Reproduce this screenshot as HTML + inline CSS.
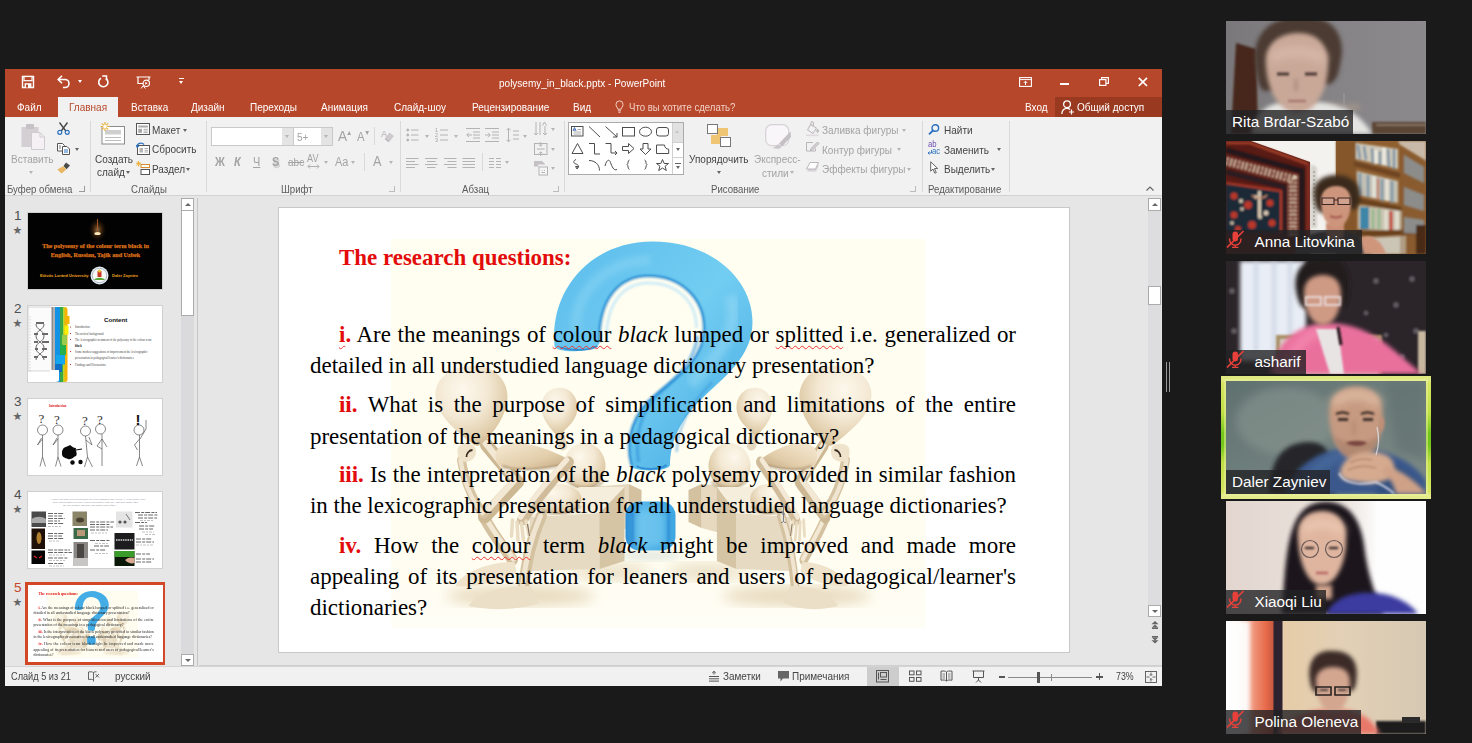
<!DOCTYPE html>
<html lang="ru">
<head>
<meta charset="utf-8">
<title>polysemy_in_black.pptx - PowerPoint</title>
<style>
*{box-sizing:border-box;margin:0;padding:0}
html,body{width:1472px;height:743px;overflow:hidden;background:#1a1a1a}
body{position:relative;font-family:"Liberation Sans","DejaVu Sans",sans-serif;font-size:11px;color:#444}
.a{position:absolute}
svg{position:absolute;overflow:visible}
/* UI text: 11px squeezed horizontally to approximate Segoe UI widths */
.t{position:absolute;white-space:nowrap;line-height:14px;height:14px;font-size:11px;color:#444;transform:scaleX(.91);transform-origin:0 50%}
.w{color:#fff}
.d{color:#a3a3a3}
.g{color:#5a5a5a;transform:scaleX(.875)}
.vs{position:absolute;top:121px;width:1px;height:71px;background:#d9d9d9}
.dd{position:absolute;width:0;height:0;border-left:2.5px solid transparent;border-right:2.5px solid transparent;border-top:3px solid #666}
.dd.l{border-top-color:#b5b5b5}
.dl{position:absolute;width:6px;height:6px;border-right:1px solid #999;border-bottom:1px solid #999}
</style>
</head>
<body>
<!-- PowerPoint window chrome -->
<div class="a" style="left:5px;top:69px;width:1157px;height:617px;background:#e6e6e6"></div>
<div class="a" style="left:5px;top:69px;width:1157px;height:48px;background:#b7472a"></div>
<div class="a" style="left:5px;top:117px;width:1157px;height:78px;background:#f1f1f1"></div>
<div class="a" style="left:5px;top:195px;width:1157px;height:1px;background:#d2d2d2"></div>
<!-- title bar -->
<div class="t w" style="left:499px;top:76px">polysemy_in_black.pptx - PowerPoint</div>
<svg style="left:21px;top:75px" width="14" height="14" viewBox="0 0 14 14"><path d="M1.5 1.5h11v11h-11z" fill="none" stroke="#fff" stroke-width="1.4"/><rect x="3" y="1.5" width="8" height="4.2" fill="#b7472a" stroke="#fff" stroke-width="1.2"/><rect x="3.6" y="8.2" width="6.8" height="4.3" fill="#fff"/><rect x="5" y="9.6" width="2" height="2.9" fill="#b7472a"/></svg>
<svg style="left:57px;top:75px" width="14" height="13" viewBox="0 0 14 13"><path d="M1.2 4.5H8a4 4 0 0 1 0 8H6" fill="none" stroke="#fff" stroke-width="1.6"/><path d="M5 .8 1.2 4.5 5 8.2" fill="none" stroke="#fff" stroke-width="1.6"/></svg>
<div class="dd" style="left:77.5px;top:80px;border-top-color:#fff"></div>
<svg style="left:97px;top:75px" width="13" height="13" viewBox="0 0 13 13"><path d="M8.8 3.3A4.6 4.6 0 1 1 4 3.2" fill="none" stroke="#fff" stroke-width="1.6"/><path d="M5.2 .9h4.3v4.3" fill="none" stroke="#fff" stroke-width="1.5"/></svg>
<svg style="left:136px;top:76px" width="15" height="13" viewBox="0 0 15 13"><path d="M.5 1h14M2 1v6.5h5M13 1v3" fill="none" stroke="#fff" stroke-width="1.2"/><circle cx="10.3" cy="7.3" r="3.2" fill="none" stroke="#fff" stroke-width="1.1"/><path d="M9.3 5.8v3l2.4-1.5z" fill="#fff"/><path d="M5 12.5l2.3-3M9.3 12.5 7.3 9.8" stroke="#fff" stroke-width="1" fill="none"/></svg>
<div class="a" style="left:179px;top:78px;width:5px;height:1px;background:#fff"></div>
<div class="dd" style="left:179px;top:81px;border-top-color:#fff"></div>
<!-- window controls -->
<svg style="left:1019px;top:77px" width="13" height="10" viewBox="0 0 13 10"><rect x=".6" y=".6" width="11.8" height="8.8" fill="none" stroke="#fff" stroke-width="1.1"/><path d="M.6 2.6h11.8" stroke="#fff" stroke-width="1"/><path d="M6.5 8V4.4M4.7 6 6.5 4.2 8.3 6" fill="none" stroke="#fff" stroke-width="1"/></svg>
<div class="a" style="left:1060px;top:83px;width:9px;height:1.6px;background:#fff"></div>
<svg style="left:1099px;top:77px" width="10" height="9" viewBox="0 0 10 9"><rect x=".6" y="2.6" width="6.3" height="5.8" fill="none" stroke="#fff" stroke-width="1.2"/><path d="M2.6 2.4V.6h6.8v5.8H7.2" fill="none" stroke="#fff" stroke-width="1.2"/></svg>
<svg style="left:1138px;top:77px" width="10" height="10" viewBox="0 0 10 10"><path d="M.8.8l8.2 8.2M9 .8.8 9" stroke="#fff" stroke-width="1.7"/></svg>
<!-- tabs -->
<div class="a" style="left:58px;top:97px;width:60px;height:20px;background:#f1f1f1"></div>
<div class="a" style="left:1055px;top:97px;width:107px;height:20px;background:#99391f"></div>
<div class="t w" style="left:17px;top:100px">Файл</div>
<div class="t" style="left:69px;top:100px;color:#b7472a">Главная</div>
<div class="t w" style="left:131px;top:100px">Вставка</div>
<div class="t w" style="left:191px;top:100px">Дизайн</div>
<div class="t w" style="left:250px;top:100px">Переходы</div>
<div class="t w" style="left:321px;top:100px">Анимация</div>
<div class="t w" style="left:394px;top:100px">Слайд-шоу</div>
<div class="t w" style="left:472px;top:100px">Рецензирование</div>
<div class="t w" style="left:573px;top:100px">Вид</div>
<svg style="left:615px;top:100px" width="9" height="13" viewBox="0 0 9 13"><path d="M2.8 9.2C2.8 7.6 1 6.8 1 4.4a3.5 3.5 0 0 1 7 0C8 6.8 6.2 7.6 6.2 9.2z" fill="none" stroke="#f1cfc5" stroke-width="1"/><path d="M3 10.8h3M3.4 12.3h2.2" stroke="#f1cfc5" stroke-width="1"/></svg>
<div class="t" style="left:629px;top:100px;color:#f1cfc5;transform:scaleX(.875)">Что вы хотите сделать?</div>
<div class="t w" style="left:1025px;top:100px">Вход</div>
<svg style="left:1061px;top:100px" width="14" height="15" viewBox="0 0 14 15"><circle cx="6" cy="4.2" r="3.4" fill="none" stroke="#fff" stroke-width="1.3"/><path d="M.8 14c.3-3.6 2.2-5.6 5.2-5.6 1.300 0 2.300.4 3.100 1" fill="none" stroke="#fff" stroke-width="1.3"/><path d="M10.5 9.500v5M8 12h5" stroke="#fff" stroke-width="1.2"/></svg>
<div class="t w" style="left:1077px;top:100px">Общий доступ</div>
<!-- ribbon: clipboard -->
<svg style="left:21px;top:124px" width="24" height="26" viewBox="0 0 24 26"><rect x=".5" y="3" width="17" height="20" fill="#d3cfd3"/><rect x="5" y="0" width="8" height="5" rx="1" fill="#c5c1c5"/><path d="M10.500 8.500h8.500l4.500 4.500v12.500h-13z" fill="#f4f0f4" stroke="#cfcbcf" stroke-width="1"/><path d="M19 8.500v4.500h4.500" fill="none" stroke="#cfcbcf"/></svg>
<div class="t d" style="left:11px;top:152px">Вставить</div>
<div class="dd l" style="left:29px;top:171px"></div>
<svg style="left:57px;top:122px" width="13" height="13" viewBox="0 0 13 13"><path d="M2.500.5 8.800 9M10.500.5 4.200 9" stroke="#444" stroke-width="1.300" fill="none"/><circle cx="2.800" cy="10.300" r="2" fill="none" stroke="#2b71c1" stroke-width="1.200"/><circle cx="10.200" cy="10.300" r="2" fill="none" stroke="#2b71c1" stroke-width="1.200"/></svg>
<svg style="left:57px;top:143px" width="13" height="12" viewBox="0 0 13 12"><path d="M.5.5h5l2 2V8h-7z" fill="#fff" stroke="#555" stroke-width="1"/><path d="M5.500 3.500h4.500l2.500 2.500v5.500h-7z" fill="#fff" stroke="#555" stroke-width="1"/><path d="M7 7h4M7 9h4" stroke="#2b71c1" stroke-width="1"/><path d="M2 3h2M2 5h2" stroke="#555" stroke-width=".8"/></svg>
<div class="dd" style="left:75px;top:148px"></div>
<svg style="left:57px;top:162px" width="14" height="12" viewBox="0 0 14 12"><path d="M9 .5 13 3.500 9.500 7.200 6.500 4z" fill="#4a4a4a"/><path d="M6.200 4.300 9.300 7.500 4.500 11.500.3 7.500z" fill="#eab560"/></svg>
<div class="t g" style="left:7px;top:182px">Буфер обмена</div>
<div class="dl" style="left:79px;top:186px"></div>
<div class="vs" style="left:90px"></div>
<!-- ribbon: slides -->
<svg style="left:100px;top:122px" width="25" height="23" viewBox="0 0 25 23"><rect x="2" y="4.500" width="22.500" height="17.500" fill="#fff" stroke="#8c8c8c" stroke-width="1"/><rect x="5" y="8" width="16" height="4.500" fill="#cfcfcf"/><path d="M5 15.500h16M5 18.500h16" stroke="#bdbdbd" stroke-width="1"/><g stroke="#eab03a" stroke-width="1.200"><path d="M5 0v9M.5 4.500h9M1.800 1.300l6.400 6.400M8.200 1.300 1.800 7.700"/></g><circle cx="5" cy="4.500" r="1.800" fill="#fff"/></svg>
<div class="t" style="left:95px;top:152px">Создать</div>
<div class="t" style="left:97px;top:165px">слайд</div>
<div class="dd" style="left:126px;top:171px"></div>
<svg style="left:136px;top:123px" width="14" height="12" viewBox="0 0 14 12"><rect x=".5" y=".5" width="13" height="11" fill="#fff" stroke="#555" stroke-width="1"/><rect x="2.200" y="2.500" width="9.600" height="2" fill="#a9a9a9"/><rect x="2.200" y="5.800" width="3.800" height="4" fill="#a9a9a9"/><path d="M7.500 6.300h4.300M7.500 8h4.300M7.500 9.600h4.300" stroke="#999" stroke-width=".8"/></svg>
<div class="t" style="left:152px;top:123px">Макет</div>
<div class="dd" style="left:183px;top:128.500px"></div>
<svg style="left:136px;top:142px" width="14" height="13" viewBox="0 0 14 13"><rect x="1.500" y="3.500" width="12" height="9" fill="#fff" stroke="#555" stroke-width="1"/><rect x="3.500" y="6" width="3.500" height="4.500" fill="#b5b5b5"/><path d="M8.500 6.500h3.500M8.500 8.300h3.500M8.500 10h3.500" stroke="#999" stroke-width=".8"/><path d="M.8 5.200C.8 2.800 2.600 1.200 5 1.200c1.300 0 2.300.5 3 1.300" fill="none" stroke="#2b71c1" stroke-width="1.300"/><path d="M0 2.800.9 5.800 3.600 4.500z" fill="#2b71c1"/></svg>
<div class="t" style="left:152px;top:142px">Сбросить</div>
<svg style="left:136px;top:161px" width="14" height="14" viewBox="0 0 14 14"><rect x="5" y="3.500" width="8.500" height="3" fill="#fff" stroke="#d98c2b" stroke-width="1"/><rect x="5" y="8.500" width="8.500" height="5" fill="#fff" stroke="#555" stroke-width="1"/><g stroke="#eab03a" stroke-width=".9"><path d="M2.500 0v5.500M0 2.700h5.200M.7.900l3.700 3.700M4.400.9.700 4.600"/></g></svg>
<div class="t" style="left:152px;top:162px">Раздел</div>
<div class="dd" style="left:186px;top:167.500px"></div>
<div class="t g" style="left:131px;top:182px">Слайды</div>
<div class="vs" style="left:206px"></div>
<!-- ribbon: font -->
<div class="a" style="left:211px;top:127px;width:83px;height:18.500px;background:#fff;border:1px solid #c9c9c9"></div>
<div class="a" style="left:282px;top:128px;width:11px;height:16.500px;background:#e4e4e4"></div>
<div class="a" style="left:293px;top:127px;width:40px;height:18.500px;background:#fff;border:1px solid #c9c9c9"></div>
<div class="a" style="left:321px;top:128px;width:11px;height:16.500px;background:#e4e4e4"></div>
<div class="dd l" style="left:285px;top:135px"></div>
<div class="dd l" style="left:324px;top:135px"></div>
<div class="t d" style="left:297px;top:130px">5+</div>
<div class="t d" style="left:338px;top:128px;font-size:15px;line-height:16px;height:16px">A</div>
<div class="t d" style="left:346px;top:126px;font-size:7px">▲</div>
<div class="t d" style="left:357px;top:130px;font-size:12.500px">A</div>
<div class="t d" style="left:364px;top:126px;font-size:7px">▼</div>
<div class="a" style="left:373.500px;top:127px;width:1px;height:18px;background:#d9d9d9"></div>
<svg style="left:381px;top:129px" width="14" height="14" viewBox="0 0 14 14"><text x="0" y="8" font-size="9" fill="#b4b0b4" font-family="Liberation Sans, sans-serif">A</text><path d="M8.500 3.500 13 7l-4.500 5.500L4.300 9z" fill="#cdc9cd"/><path d="M4 9.500 8 12.800" stroke="#b4b0b4" stroke-width="1.200"/></svg>
<div class="t d" style="left:215px;top:155px;font-weight:bold;font-size:12px">Ж</div>
<div class="t d" style="left:234px;top:155px;font-style:italic;font-weight:bold;font-size:12px">К</div>
<div class="t d" style="left:253px;top:155px;font-size:12px;text-decoration:underline">Ч</div>
<div class="t d" style="left:272px;top:155px;font-size:12px;font-weight:bold;text-shadow:1px 1.500px 1px #ccc">S</div>
<div class="t d" style="left:288px;top:155px;font-size:11px;text-decoration:line-through">abc</div>
<div class="t d" style="left:307px;top:152px;font-size:10px">AV</div>
<svg style="left:307px;top:164px" width="13" height="5" viewBox="0 0 13 5"><path d="M1 2.500h11M3 .5 1 2.500l2 2M10 .5l2 2-2 2" fill="none" stroke="#b0b0b0" stroke-width="1"/></svg>
<div class="dd l" style="left:323.500px;top:161px"></div>
<div class="t d" style="left:334.500px;top:155px;font-size:12px">Aa</div>
<div class="dd l" style="left:351px;top:161px"></div>
<div class="a" style="left:363.500px;top:153px;width:1px;height:18px;background:#d9d9d9"></div>
<div class="t d" style="left:373px;top:154px;font-size:14px">A</div>
<div class="dd l" style="left:388.500px;top:161px"></div>
<div class="t g" style="left:280.500px;top:182px">Шрифт</div>
<div class="dl" style="left:389px;top:186px;border-color:#bbb"></div>
<div class="vs" style="left:400px"></div>
<!-- ribbon: paragraph (disabled, light grey) -->
<svg style="left:406px;top:128px" width="150" height="48" viewBox="0 0 150 48" fill="none" stroke="#b3b3b3" stroke-width="1">
<g><circle cx="1.800" cy="2" r="1" fill="#b3b3b3"/><circle cx="1.800" cy="7" r="1" fill="#b3b3b3"/><circle cx="1.800" cy="12" r="1" fill="#b3b3b3"/><path d="M5 2h7.500M5 7h7.500M5 12h7.500"/></g>
<g transform="translate(29,0)"><path d="M5 2h8M5 7h8M5 12h8"/></g>
<g transform="translate(60,0)"><path d="M0 .5h14M7 4h7M7 7h7M7 10h7M0 13.500h14M6 7H.8M3 4.800.8 7 3 9.200"/></g>
<g transform="translate(79,0)"><path d="M0 .5h14M7 4h7M7 7h7M7 10h7M0 13.500h14M0 7h5.200M3 4.800 5.200 7 3 9.200"/></g>
<g transform="translate(100,0)"><path d="M2.500 0v14M.5 2.200 2.500.2l2 2M.5 11.800l2 2 2-2M7 3h6M7 7h6M7 11h6"/></g>
<g transform="translate(0,30)"><path d="M0 .5h12.500M0 3.500h9M0 6.500h12.500M0 9.500h9"/></g>
<g transform="translate(19,30)"><path d="M0 .5h12.500M2 3.500h8.500M0 6.500h12.500M2 9.500h8.500"/></g>
<g transform="translate(38,30)"><path d="M0 .5h12.500M3.500 3.500h9M0 6.500h12.500M3.500 9.500h9"/></g>
<g transform="translate(56.500,30)"><path d="M0 .5h12.500M0 3.500h12.500M0 6.500h12.500M0 9.500h12.500"/></g>
<g transform="translate(83,30)"><path d="M0 .5h5M7 .5h5M0 3.500h5M7 3.500h5M0 6.500h5M7 6.500h5M0 9.500h5M7 9.500h5"/></g>
<g transform="translate(128,-6)"><path d="M2 0v13M0 11l2 2 2-2M6 0v13M11 4v9M9 11l2 2 2-2M8.500 3.500 10.500 0l2 3.500"/></g>
<g transform="translate(128,14)"><rect x=".5" y="1.500" width="12.500" height="11"/><path d="M6.700 0v4M5 2.500 6.700 4.200 8.400 2.500M6.700 14v-4M5 11.500l1.700-1.700 1.700 1.700M3 7h7.500" /></g>
<g transform="translate(128,33)"><path d="M0 0h8l3.500 3.500H3.500L5 5.500 0 5.500z" fill="#c4c0c4" stroke="none"/><rect x="5" y="6" width="8.500" height="8" fill="#f6f6f6"/><path d="M7.500 9.500h1M10 9.500h1M7.500 11.500h3.500" /></g>
</svg>
<div class="t d" style="left:434.500px;top:128px;font-size:6px;line-height:5px;height:16px;white-space:pre">1
2
3</div>
<div class="dd l" style="left:424.500px;top:134.500px"></div>
<div class="dd l" style="left:453.500px;top:134.500px"></div>
<div class="dd l" style="left:523px;top:134.500px"></div>
<div class="dd l" style="left:551px;top:128px"></div>
<div class="dd l" style="left:551px;top:147.500px"></div>
<div class="dd l" style="left:551px;top:167px"></div>
<div class="dd l" style="left:505px;top:161px"></div>
<div class="a" style="left:482px;top:153px;width:1px;height:18px;background:#d9d9d9"></div>
<div class="t g" style="left:461.500px;top:182px">Абзац</div>
<div class="dl" style="left:553px;top:186px;border-color:#bbb"></div>
<div class="vs" style="left:563.500px"></div>
<!-- ribbon: drawing -->
<div class="a" style="left:568px;top:122px;width:116px;height:53px;background:#fff;border:1px solid #ababab"></div>
<div class="a" style="left:672px;top:123px;width:11px;height:18.500px;background:#e1e1e1"></div>
<div class="a" style="left:672px;top:141.500px;width:11px;height:1px;background:#d0d0d0"></div>
<div class="a" style="left:672px;top:157px;width:11px;height:1px;background:#d0d0d0"></div>
<div class="a" style="left:672px;top:123px;width:1px;height:51px;background:#d0d0d0"></div>
<div class="a" style="left:675px;top:130px;width:0;height:0;border-left:2.500px solid transparent;border-right:2.500px solid transparent;border-bottom:3px solid #c4c4c4"></div>
<div class="dd" style="left:675.500px;top:148px"></div>
<div class="a" style="left:675px;top:163px;width:6px;height:1px;background:#666"></div>
<div class="dd" style="left:675.500px;top:166px"></div>
<svg style="left:571px;top:125px" width="100" height="48" viewBox="0 0 100 48" fill="none" stroke="#4d4d4d" stroke-width="1">
<rect x=".5" y="1.500" width="11.500" height="9.500" fill="#fff"/><path d="M2.500 7h7.500M2.500 9h7.500M6.500 4.500h3.500" stroke="#8a8a8a" stroke-width=".7"/><path d="M2 6 3.500 2.500 5 6M2.600 5h1.800" stroke="#2b5fb0" stroke-width=".9"/>
<path d="M18 1.500 29 12"/>
<path d="M34.500 1.500 46 12M46 8v4h-4"/>
<rect x="51.500" y="2.500" width="12" height="8.500"/>
<ellipse cx="74.500" cy="6.700" rx="6" ry="4.500"/>
<rect x="85.500" y="2.500" width="12" height="8.500" rx="2.500"/>
<path d="M6.500 18.500 12 28.500H1z"/>
<path d="M18 18.500h5.500V29H29"/>
<path d="M34.500 18.500h5.500V28h6M44 26l2 2-2 2"/>
<path d="M51.500 21.500h6V18.500l5.500 5-5.500 5v-3h-6z"/>
<path d="M72 18.500h5v5.500h3L74.500 29.500 69 24h3z"/>
<path d="M85.500 20h8a4.200 4.200 0 0 0 4.200 4.200V28.500H85.500z"/>
<path d="M5 34.500c-3.500 1.500-2.500 4 0 4.500s3 2.500 1 4.500M4.500 41.500l1.600 2.500 1.600-2.500z"/>
<path d="M18 35.500c6 0 10.500 4 10.500 10"/>
<path d="M34 41c1.500-6 4-7.500 5.500-3.500s3 8.500 6.500 7"/>
<path d="M58.500 35c-2 0-1 4.500-2.500 4.700 1.500.2.500 4.700 2.500 4.700"/>
<path d="M73.500 35c2 0 1 4.500 2.500 4.700-1.500.2-.5 4.700-2.500 4.700"/>
<path d="M91.500 34.500l1.700 4h4.300l-3.400 2.700 1.200 4.300-3.800-2.500-3.800 2.500 1.200-4.300-3.400-2.700h4.300z"/>
</svg>
<div class="a" style="left:717px;top:127.500px;width:10.500px;height:8.500px;background:#efc473"></div>
<div class="a" style="left:710.500px;top:135px;width:10.500px;height:9px;background:#efc473"></div>
<div class="a" style="left:707px;top:124px;width:10.500px;height:9.500px;background:#fff;border:1px solid #777"></div>
<div class="a" style="left:720px;top:137px;width:10.500px;height:10px;background:#fff;border:1px solid #777"></div>
<div class="t" style="left:688.500px;top:152px">Упорядочить</div>
<div class="dd" style="left:717px;top:171px"></div>
<svg style="left:765px;top:124px" width="27" height="26" viewBox="0 0 27 26"><rect x=".7" y=".7" width="23" height="21" rx="6" fill="#f8f6f8" stroke="#d6d2d6" stroke-width="1.200"/><path d="M25.500 7.500 26 13 17 22.500 14 19.500z" fill="#c4c0c4"/><path d="M13.500 20 16.500 23c-2 2.500-6 2-9 1 3-.5 3.500-3 6-4z" fill="#cbc7cb"/></svg>
<div class="t d" style="left:754px;top:152px">Экспресс-</div>
<div class="t d" style="left:761.500px;top:165.500px">стили</div>
<div class="dd l" style="left:790px;top:171px"></div>
<svg style="left:806px;top:121px" width="14" height="15" viewBox="0 0 14 15" fill="none" stroke="#b9b5b9" stroke-width="1"><path d="M4.500 3.500 10.500 7 7 12.500 1.500 9z"/><path d="M5 4.500V1.800a1.200 1.200 0 0 1 2.400 0V5"/><path d="M11.500 8c1 1.500 1.500 2.500.5 3.200s-1.800-.7-.5-3.200z" fill="#c9c5c9"/><path d="M0 14.300h12.500" stroke="#dedade" stroke-width="1.600"/></svg>
<div class="t d" style="left:822px;top:123px">Заливка фигуры</div>
<div class="dd l" style="left:902px;top:128.500px"></div>
<svg style="left:806px;top:141px" width="14" height="11" viewBox="0 0 14 11" fill="none" stroke="#b9b5b9" stroke-width="1"><path d="M7 1.500H.5v8.500h9V7.500"/><path d="M5 7.500 11.500 1l1.500 1.500L6.500 9l-2 .5z" fill="#d4d0d4"/></svg>
<div class="t d" style="left:822px;top:142.500px">Контур фигуры</div>
<div class="dd l" style="left:897px;top:148px"></div>
<svg style="left:806px;top:162px" width="14" height="11" viewBox="0 0 14 11"><path d="M1 9.500 4.500 3h8.500L10 9.500z" fill="#d6d2d6"/><path d="M.5 7 4 .5h8.500L9.500 7z" fill="#fff" stroke="#b9b5b9" stroke-width="1"/></svg>
<div class="t d" style="left:822px;top:162px">Эффекты фигуры</div>
<div class="dd l" style="left:907px;top:167.500px"></div>
<div class="t g" style="left:711px;top:182px">Рисование</div>
<div class="dl" style="left:910px;top:186px;border-color:#bbb"></div>
<div class="vs" style="left:921.500px"></div>
<!-- ribbon: editing -->
<svg style="left:928px;top:124px" width="12" height="11" viewBox="0 0 12 11" fill="none" stroke="#2b71c1"><circle cx="7.300" cy="4" r="3.300" stroke-width="1.400"/><path d="M5 6.500 1 10.300" stroke-width="1.800"/></svg>
<div class="t" style="left:943.500px;top:123px">Найти</div>
<div class="t" style="left:928px;top:140px;font-size:8.500px;color:#6a4fb3;line-height:9px;height:9px">ab</div>
<div class="t" style="left:932px;top:147px;font-size:8.500px;color:#2b71c1;line-height:9px;height:9px">ac</div>
<svg style="left:927px;top:149px" width="5" height="6" viewBox="0 0 5 6"><path d="M4.500 1v3H1M2.500 2.500 1 4l1.500 1.500" fill="none" stroke="#2b71c1" stroke-width=".9"/></svg>
<div class="t" style="left:943.500px;top:142.500px">Заменить</div>
<div class="dd" style="left:996.500px;top:148px"></div>
<svg style="left:930px;top:161px" width="9" height="13" viewBox="0 0 9 13"><path d="M.7.800v9.400l2.300-2.200 1.800 4.200 1.500-.6-1.800-4.100h3.200z" fill="#fff" stroke="#555" stroke-width=".9"/></svg>
<div class="t" style="left:943.500px;top:162px">Выделить</div>
<div class="dd" style="left:990.500px;top:167.500px"></div>
<div class="t g" style="left:927.500px;top:182px">Редактирование</div>
<div class="vs" style="left:1009px"></div>
<svg style="left:1146px;top:186px" width="8" height="5" viewBox="0 0 8 5"><path d="M.5 4.500 4 1l3.500 3.500" fill="none" stroke="#666" stroke-width="1.200"/></svg>
<!-- thumbnail pane scrollbar + dividers -->
<div class="a" style="left:181px;top:198px;width:13px;height:468px;background:#dad9db"></div>
<div class="a" style="left:181px;top:198px;width:13px;height:12.500px;background:#fff;border:1px solid #ababab"></div>
<div class="a" style="left:181px;top:210px;width:13px;height:106px;background:#fff;border:1px solid #ababab"></div>
<div class="a" style="left:181px;top:654px;width:13px;height:12px;background:#fff;border:1px solid #ababab"></div>
<div class="a" style="left:184.500px;top:202.500px;width:0;height:0;border-left:3px solid transparent;border-right:3px solid transparent;border-bottom:3.500px solid #666"></div>
<div class="a" style="left:184.500px;top:658.500px;width:0;height:0;border-left:3px solid transparent;border-right:3px solid transparent;border-top:3.500px solid #666"></div>
<div class="a" style="left:197px;top:198px;width:1px;height:468px;background:#c6c6c6"></div>
<div class="a" style="left:199px;top:665px;width:963px;height:1px;background:#cfcfcf"></div>
<!-- editor scrollbar -->
<div class="a" style="left:1148px;top:198px;width:13px;height:419px;background:#dddcde"></div>
<div class="a" style="left:1148px;top:198px;width:13px;height:12.500px;background:#fff;border:1px solid #ababab"></div>
<div class="a" style="left:1148px;top:286px;width:13px;height:19px;background:#fff;border:1px solid #ababab"></div>
<div class="a" style="left:1148px;top:605px;width:13px;height:12px;background:#fff;border:1px solid #ababab"></div>
<div class="a" style="left:1151.500px;top:202.500px;width:0;height:0;border-left:3px solid transparent;border-right:3px solid transparent;border-bottom:3.500px solid #666"></div>
<div class="a" style="left:1151.500px;top:609.500px;width:0;height:0;border-left:3px solid transparent;border-right:3px solid transparent;border-top:3.500px solid #666"></div>
<svg style="left:1151px;top:621px" width="8" height="23" viewBox="0 0 8 23" fill="#666"><path d="M4 0 7.500 3.200H.5zM4 3.500 7.500 6.700H.5z"/><rect x="1" y="7" width="6" height="1"/><rect x="1" y="15" width="6" height="1"/><path d="M4 22.500.5 19.300h7zM4 19.500.5 16.300h7z"/></svg>
<!-- zoom window splitter -->
<div class="a" style="left:1166px;top:362px;width:1px;height:30px;background:#9a9a9a"></div>
<div class="a" style="left:1169px;top:362px;width:1px;height:30px;background:#9a9a9a"></div>
<!-- status bar -->
<div class="a" style="left:5px;top:667px;width:1157px;height:19px;background:#f1f1f1"></div>
<div class="a" style="left:5px;top:666px;width:1157px;height:1px;background:#d4d4d4"></div>
<div class="t" style="left:11px;top:669px;transform:scaleX(.835)">Слайд 5 из 21</div>
<svg style="left:88px;top:671px" width="12" height="11" viewBox="0 0 12 11" fill="none" stroke="#555" stroke-width=".9"><path d="M5.500 1.500C4.500.8 2.500.6.500 1v7.500c2-.4 4-.2 5 .5zM5.500 1.500C6.500.8 7.500.6 8.500.8"/><path d="M5.500 9v1.500M7.500 3l3.500 3.500M11 3 7.500 6.500" /></svg>
<div class="t" style="left:114.500px;top:669px;transform:scaleX(.9)">русский</div>
<svg style="left:709px;top:671px" width="10" height="11" viewBox="0 0 10 11" stroke="#555" stroke-width="1" fill="none"><path d="M0 5.500h10M0 7.800h10M0 10.100h10M5 .5v3M3.200 2 5 .3 6.800 2"/></svg>
<div class="t" style="left:722.500px;top:669px;transform:scaleX(.9)">Заметки</div>
<svg style="left:778px;top:671px" width="11" height="11" viewBox="0 0 11 11"><path d="M0 0h11v7.500H5L2.500 10.500V7.500H0z" fill="#666"/></svg>
<div class="t" style="left:792px;top:669px;transform:scaleX(.905)">Примечания</div>
<div class="a" style="left:866.500px;top:667px;width:32.500px;height:19px;background:#cdcdcd"></div>
<svg style="left:876px;top:670px" width="110" height="13" viewBox="0 0 110 13" fill="none" stroke="#555" stroke-width="1"><rect x=".5" y=".5" width="12" height="11.500"/><rect x="4.500" y="2.500" width="6" height="4.500"/><path d="M2.500 2.500v7M4.500 9.500h6"/>
<g transform="translate(33,0)"><rect x=".5" y="1" width="4.500" height="3.800"/><rect x="7.500" y="1" width="4.500" height="3.800"/><rect x=".5" y="7.500" width="4.500" height="3.800"/><rect x="7.500" y="7.500" width="4.500" height="3.800"/></g>
<g transform="translate(64.500,0)"><path d="M6 2C5 1 3 .8.500 1.200v9c2.500-.4 4.500-.2 5.500.8 1-1 3-1.200 5.500-.8v-9C9 .8 7 1 6 2zM6 2v9"/><path d="M2 4h2.500M2 6h2.500M2 8h2.500M7.500 4H10M7.500 6H10M7.500 8H10" stroke-width=".7"/></g>
<g transform="translate(96.500,0)"><path d="M0 1h12M1 1v6.500h10V1M6 7.500V10M3.500 12.500 6 10l2.500 2.500"/></g></svg>
<div class="a" style="left:999px;top:676px;width:5.500px;height:1.500px;background:#555"></div>
<div class="a" style="left:1008px;top:676.500px;width:84px;height:1px;background:#8a8a8a"></div>
<div class="a" style="left:1050.500px;top:673.500px;width:1px;height:7px;background:#8a8a8a"></div>
<div class="a" style="left:1036.500px;top:671.500px;width:3.500px;height:11px;background:#555"></div>
<div class="a" style="left:1096px;top:676px;width:7px;height:1.500px;background:#555"></div>
<div class="a" style="left:1098.800px;top:673.300px;width:1.500px;height:7px;background:#555"></div>
<div class="t" style="left:1115.500px;top:669px;transform:scaleX(.8)">73%</div>
<svg style="left:1145px;top:671px" width="12" height="12" viewBox="0 0 12 12" fill="none" stroke="#555" stroke-width=".9"><rect x=".5" y=".5" width="11" height="11"/><path d="M6 1.500v3M6 10.500v-3M1.500 6h3M10.500 6h-3M4.800 3.300 6 4.500l1.200-1.200M4.800 8.700 6 7.500l1.200 1.200"/></svg>
<!-- slide thumbnails -->
<style>
.sn{position:absolute;left:7.500px;width:14px;text-align:right;font-size:13.500px;line-height:14px;color:#505050}
.star{position:absolute;left:12px;width:11px;font-size:11px;line-height:10px;color:#666;text-align:center}
.th{position:absolute;left:27px;width:136px;height:77.500px;background:#fff;border:1px solid #d0d0d0;overflow:hidden}
.th svg{left:0;top:0}
.tx{font-family:"Liberation Serif",serif}
</style>
<div class="sn" style="top:209px">1</div><div class="star" style="top:225px">★</div>
<div class="sn" style="top:302px">2</div><div class="star" style="top:318px">★</div>
<div class="sn" style="top:395px">3</div><div class="star" style="top:411px">★</div>
<div class="sn" style="top:488px">4</div><div class="star" style="top:504px">★</div>
<div class="sn" style="top:581px;color:#c8472a">5</div><div class="star" style="top:597px">★</div>

<!-- thumb 1 -->
<div class="th" style="top:212px;background:#000">
<svg width="134" height="76" viewBox="0 0 134 76">
<defs><radialGradient id="gl"><stop offset="0" stop-color="#ffe0a0"/><stop offset=".35" stop-color="#c87830" stop-opacity=".7"/><stop offset="1" stop-color="#301808" stop-opacity="0"/></radialGradient></defs>
<rect width="134" height="76" fill="#020202"/>
<ellipse cx="69.500" cy="17" rx="9" ry="12" fill="url(#gl)" opacity=".55"/><ellipse cx="69.500" cy="20.500" rx="3.200" ry="1.600" fill="#ffe8b8"/><path d="M69.500 6v12" stroke="#a05828" stroke-width="1"/>
<g class="tx" font-family="Liberation Serif, serif" font-weight="bold" font-size="6.100" fill="#f6a31e" text-anchor="middle" stroke="#b83a10" stroke-width=".25"><text x="67.500" y="35.300">The polysemy of the colour term  black in</text><text x="67.500" y="43.500">English, Russian, Tajik and Uzbek</text></g>
<g font-family="Liberation Sans, sans-serif" font-weight="bold" font-size="4" fill="#f6a31e"><text x="12" y="64">Eötvös Loránd University</text><text x="84" y="64">Daler Zayniev</text></g>
<circle cx="71.500" cy="62.500" r="9" fill="#e8ecf0"/><circle cx="71.500" cy="62.500" r="7.200" fill="#f8f8f8" stroke="#98a8b8" stroke-width=".8"/><path d="M66 67c2-3 9-3 11 0z" fill="#58a838"/><rect x="69.500" y="58" width="4" height="6" fill="#c83828"/><circle cx="71.500" cy="58" r="1.600" fill="#e8b838"/>
</svg></div>

<!-- thumb 2 -->
<div class="th" style="top:305px">
<svg width="134" height="76" viewBox="0 0 134 76">
<path d="M0 1h22c3 0 4.500 2 4.500 5v59H0z" fill="#fbfbfb" stroke="#bdbdbd" stroke-width=".6"/>
<path d="M2 10v56" stroke="#aaa" stroke-width=".5" stroke-dasharray="1.500 1.500"/>
<path d="M23.500 1h4v65h-4z" fill="#8c8c8c"/><path d="M25 1h3v64h-3z" fill="#b0b0b0"/>
<path d="M27 1h7v75h-7z" fill="#1292e4"/><path d="M32 1h4v75h-4z" fill="#3aa846"/><path d="M35 1h2.500v75H35z" fill="#b4d334"/><path d="M36.500 1c2 0 3 1 3 3v70c0 1-1 2-3 2z" fill="#f6b400"/>
<path d="M38 10h3.500v8H38z" fill="#f6b400"/><path d="M36.500 19.500h4v9h-4z" fill="#f8f000"/><path d="M34 29h5v9.500h-5z" fill="#9acc4c"/><path d="M32 39h6v10h-6z" fill="#22b14c"/><path d="M28 49h9v9.500h-9z" fill="#14a6ec"/><path d="M27 58h7v8h-7z" fill="#0f6fc6"/>
<path d="M22 64h9v10c0 1-1 2-4 2H22z" fill="#fff"/>
<g stroke="#6a6a6a" stroke-width="1" fill="none"><path d="M8 18c0 6 8 6 8 12s-8 6-8 12 8 6 8 12M16 18c0 6-8 6-8 12s8 6 8 12-8 6-8 12"/><path d="M8 17h8M6 28h4M14 28h6M6 36h4M14 36h7M7 43h3M14 43h5M6 51h4M14 51h5" stroke-width="1.800"/></g>
<text x="76" y="16" font-family="Liberation Sans, sans-serif" font-weight="bold" font-size="6.200" fill="#111">Content</text>
<g font-family="Liberation Serif, serif" font-size="3" fill="#444"><text x="47" y="22">Introduction</text><text x="47" y="28.500">Theoretical background</text><text x="47" y="34.500">The lexicographic treatment of the polysemy of the colour term</text><text x="47" y="40.500" font-weight="bold" font-style="italic" fill="#000">black</text><text x="47" y="46.500">Some modest suggestions of improvement the lexicographic</text><text x="47" y="52.500">presentation in pedagogical/learner's  dictionaries</text><text x="47" y="59.500">Findings and Discussions</text></g>
<g fill="#b02020"><circle cx="42.500" cy="21" r=".6"/><circle cx="42.500" cy="27.500" r=".6"/><circle cx="42.500" cy="33.500" r=".6"/><circle cx="42.500" cy="45.500" r=".6"/><circle cx="42.500" cy="58.500" r=".6"/></g>
</svg></div>

<!-- thumb 3 -->
<div class="th" style="top:398px">
<svg width="134" height="76" viewBox="0 0 134 76">
<text x="21" y="8" font-family="Liberation Serif, serif" font-weight="bold" font-size="3.200" fill="#e01010">Introduction</text>
<g fill="none" stroke="#555" stroke-width=".7">
<g id="sm"><circle cx="14.500" cy="31" r="5"/><path d="M14.500 36v22M14.500 58l-2.500 9.500M14.500 58l3 9.500M14.500 40l-5 6 4-7"/></g>
<use href="#sm" x="15.500"/><g transform="translate(43,1)"><circle cx="14.500" cy="31" r="5"/><path d="M14.500 36l2 21M16.500 57l-3 10M16.500 57l5 10M15 40l6 5-3-8"/></g>
<g transform="translate(58,0)"><circle cx="14.500" cy="30" r="5"/><path d="M16 35v32M16 40l-5 7 5 3M16 40l5 8"/></g>
<g transform="translate(97,0)"><circle cx="14" cy="31" r="5"/><path d="M14.500 36v22M14.500 58l-3 9M14.500 58l3 9M14.500 40l-5 6 3 5M15 40l6-10v-9"/></g>
</g>
<g font-family="Liberation Serif, serif" font-size="13" fill="#333"><text x="10.500" y="23.500">?</text><text x="26" y="24.500">?</text><text x="54" y="25.500">?</text><text x="69" y="24.500">?</text></g>
<text x="107.500" y="25.500" font-family="Liberation Sans, sans-serif" font-weight="bold" font-size="15" fill="#111">!</text>
<path d="M35 50c2-3 5-2 7-4 2 1 3 3 6 3-1 3 2 5 0 8-3 1-4 4-8 3-3-1-6-2-6-5s0-3 1-5z" fill="#0a0a0a"/><circle cx="44.500" cy="63.500" r="2.200" fill="#0a0a0a"/><circle cx="52.500" cy="63" r="2.200" fill="#0a0a0a"/><path d="M48 51l6-1" stroke="#0a0a0a" stroke-width="1"/>
</svg></div>

<!-- thumb 4 -->
<div class="th" style="top:491px">
<svg width="134" height="76" viewBox="0 0 134 76">
<g font-family="Liberation Sans, sans-serif" font-size="2.200" fill="#8a8a98" text-anchor="middle"><text x="70" y="8">A closer look at the colour meaning  BLACK  in the languages under review, i.e. in the source of the</text><text x="68" y="11.200">study categorization, polysemy (lumped and splitted) of BLACK, ЧЁРНЫЙ, СИЁҲ, ҚОРА</text><text x="62" y="14.400">BLACK (Russian ЧЁРНЫЙ, Tajik СИЁҲ, Uzbek ҚОРА)</text></g>
<rect x="3.500" y="19.500" width="14.500" height="15.500" fill="#4a4a4a"/><path d="M3.500 27c5-3 10-3 14.500 0v4H3.500z" fill="#aaa"/>
<rect x="3.500" y="36.500" width="13.500" height="20.500" fill="#1e1008"/><ellipse cx="11" cy="46" rx="2.500" ry="6" fill="#d89838" opacity=".8"/>
<rect x="3.500" y="58.500" width="13.500" height="13.500" fill="#050505"/><path d="M6 64l3 2M14 64l-3 2" stroke="#e02020" stroke-width="1.200"/>
<rect x="44.500" y="19.500" width="14.500" height="14.500" fill="#8a8468"/><ellipse cx="52" cy="28" rx="4" ry="2.500" fill="#4a4030"/>
<rect x="45.500" y="36" width="14.500" height="11" fill="#3a6a48"/><rect x="49" y="38" width="8" height="6" fill="#b89878"/>
<rect x="45.500" y="50" width="14.500" height="24" fill="#8a8684"/><path d="M49 52h7v14h-7z" fill="#4a4644"/><path d="M45.500 66h14.500v8H45.500z" fill="#c8c6c4"/>
<rect x="88" y="19.500" width="16.500" height="16" fill="#e4e4e4"/><circle cx="92" cy="30" r="1.600" fill="#555"/><circle cx="97" cy="30" r="1.600" fill="#555"/><path d="M98 22l4 6" stroke="#777" stroke-width="1"/>
<rect x="86.500" y="41" width="20" height="16.500" fill="#1c1c1e"/><path d="M88 48h17" stroke="#aaa" stroke-width="2" stroke-dasharray="1.500 .8"/>
<rect x="86.500" y="59" width="20" height="15" fill="#0a1808"/><path d="M86.500 59h20v6h-20z" fill="#3a9a2a"/><path d="M97 68c3-3 7-3 9.500-2v5c-3 1-7 0-9.500-3z" fill="#d8a890"/>
<g stroke="#333" stroke-width=".75" stroke-dasharray="5 1.200 3 1"><path d="M20 21.500h16M20 24h14M20 26.500h17M20 29h12M20 31.500h16M20 41.500h16M20 44h14M20 46.500h16M20 58h22M20 60.500h24M20 66h20M20 71.500h16M62 30h24M62 32.500h20M62 35h23M62 38h18M62 48.500h20M66 54h15M62 58h16M107 20.500h22M110 23h20M110 26h19M107 30.500h12M111 34h16M111 37h14M108 47h16M108 50h18M108 62h14M108 67h18M108 70h16"/></g>
<g stroke="#999" stroke-width=".6" stroke-dasharray="3 1 2 1"><path d="M20 34.500h13M21 49h11M21 63h16M21 68.500h16M21 74h15M63 41h16M67 51.500h14M67 61.500h14M112 28.500h14M114 40h12M117 42.500h11M108 53h18"/></g>
</svg></div>

<!-- thumb 5 (selected) -->
<div class="a" style="left:25px;top:582px;width:140px;height:82.500px;background:#d24726"></div>
<div class="th" style="top:584.500px;left:27.500px;width:135px;height:77.500px;border:none">
<svg width="135" height="77.500" viewBox="278 206.500 792 446" preserveAspectRatio="none">
<rect x="278" y="206" width="792" height="447" fill="#fff"/>
<rect x="390.500" y="239" width="534.500" height="389" fill="#fffdf0"/>
<g opacity=".8"><use href="#fig"/><use href="#figR"/></g>
<path d="M554 346C549 290 590 241.500 652 241.500C712 241.500 752 280 752 322C752 358 722 378 700 400C680 420 670 440 669.500 465C669 472 632 472 631 466C624 440 632 412 656 394C680 374 703.500 358 703.500 328C703.500 298 680 276 648 276C618 276 598 300 599 342C599 353 555 354 554 346z" fill="#45ade6"/>
<rect x="625" y="501.500" width="50" height="49" rx="14" fill="#3ea6e2"/>
<g font-family="Liberation Serif, serif" font-size="22.950" fill="#222">
<text x="339" y="265.300" font-weight="bold" fill="#e30b0b">The research questions:</text>
<text x="339" y="342.300" textLength="677"><tspan font-weight="bold" fill="#e30b0b">i.</tspan> Are the meanings of colour black lumped or splitted i.e. generalized or</text>
<text x="310" y="373.500">detailed in all understudied language dictionary presentation?</text>
<text x="339" y="412.600" textLength="677"><tspan font-weight="bold" fill="#e30b0b">ii.</tspan> What is the purpose of simplification and limitations of the entire</text>
<text x="310" y="443.900">presentation of the meanings in a pedagogical dictionary?</text>
<text x="339" y="482.200" textLength="677"><tspan font-weight="bold" fill="#e30b0b">iii.</tspan> Is the interpretation of the black polysemy provided in similar fashion</text>
<text x="310" y="513.500">in the lexicographic presentation for all understudied language dictionaries?</text>
<text x="339" y="552.900" textLength="677"><tspan font-weight="bold" fill="#e30b0b">iv.</tspan> How the colour term black might be improved and made more</text>
<text x="310" y="584.200" textLength="706">appealing of its presentation for leaners and users of pedagogical/learner's</text>
<text x="310" y="615.500">dictionaries?</text>
</g>
</svg></div>
<!-- slide white page + picture (drawn before text) -->
<div class="a" style="left:278px;top:206.500px;width:792px;height:446px;background:#fff;border:1px solid #c9c9c9"></div>
<svg style="left:390.500px;top:239px" width="534.500" height="389" viewBox="390.500 239 534.500 389">
<defs>
<linearGradient id="bgf" x1="0" y1="0" x2="0" y2="1"><stop offset="0" stop-color="#fffef1"/><stop offset=".8" stop-color="#fffdf0"/><stop offset="1" stop-color="#fffef6"/></linearGradient>
<radialGradient id="hd" cx=".38" cy=".3" r=".8"><stop offset="0" stop-color="#fdf8ec"/><stop offset=".45" stop-color="#f3e8d3"/><stop offset=".8" stop-color="#dfcba8"/><stop offset="1" stop-color="#c2a882"/></radialGradient>
<linearGradient id="lb" x1="0" y1="0" x2="1" y2="1"><stop offset="0" stop-color="#f6ead4"/><stop offset=".6" stop-color="#e2cdaa"/><stop offset="1" stop-color="#bfa27c"/></linearGradient>
<linearGradient id="cf" x1="0" y1="0" x2="0" y2="1"><stop offset="0" stop-color="#f3e8d3"/><stop offset="1" stop-color="#e9dabf"/></linearGradient>
<linearGradient id="cs" x1="0" y1="0" x2="1" y2="1"><stop offset="0" stop-color="#dccaa9"/><stop offset="1" stop-color="#c9b48f"/></linearGradient>
<linearGradient id="qb" x1="0" y1="0" x2="1" y2="1"><stop offset="0" stop-color="#5cbcec"/><stop offset=".5" stop-color="#72cdf1"/><stop offset="1" stop-color="#44a8e2"/></linearGradient>
<linearGradient id="qs" x1="0" y1="0" x2="1" y2="0"><stop offset="0" stop-color="#2c8fd6"/><stop offset=".35" stop-color="#57b6ea"/><stop offset="1" stop-color="#3ea6e2"/></linearGradient>
<filter id="b3"><feGaussianBlur stdDeviation="3"/></filter>
<filter id="b1"><feGaussianBlur stdDeviation="1.200"/></filter>
<filter id="b6"><feGaussianBlur stdDeviation="7"/></filter>
<g id="fgS">
  <!-- floor shadows -->
  <ellipse cx="520" cy="596" rx="75" ry="10" fill="#e2d0ae" opacity=".8" filter="url(#b6)"/>
  <ellipse cx="610" cy="572" rx="40" ry="9" fill="#dccaa6" opacity=".55" filter="url(#b6)"/>
</g>
<g id="fgC"><path d="M590 487l38-3v44l-30 8z" fill="#e6d9c0"/><path d="M628 484l13 6v32l-13 6z" fill="#d3c1a0"/></g>
<g id="fgK">
  <!-- back cube -->
  
  <!-- back figure torso + head -->
  <ellipse cx="584" cy="466" rx="21" ry="23" fill="url(#hd)"/>
  <path d="M566 480C574 490 594 490 602 482" fill="none" stroke="#a08a68" stroke-width="2.500" opacity=".6" filter="url(#b1)"/>
  <path d="M559 432l3 14" stroke="#e6d8bf" stroke-width="9" stroke-linecap="round"/>
  <path d="M556 388C569 386 578 397 577 409C576 420 567 428 560 434C558 436 555 435 553 432C546 424 541 416 541 407C541 397 547 389 556 388z" fill="url(#hd)"/>
</g>
<g id="fgB">
  <!-- front cube -->
  <path d="M529 517l70-4v56l-70 2z" fill="#e6dac3"/><path d="M599 513l25-26v74l-25 8z" fill="#d6c5a5"/><path d="M529 517l50-30h45l-25 26z" fill="#f6eedd"/>
  <!-- butt / thigh mass -->
  <ellipse cx="558" cy="499" rx="23" ry="15" fill="url(#hd)"/>
  <path d="M538 508C550 516 570 515 580 506" fill="none" stroke="#9a8260" stroke-width="2.500" opacity=".55" filter="url(#b1)"/>
  <!-- second shin + foot 2 -->
  <path d="M541 516C532 536 526 560 523 588" fill="none" stroke="#d4c1a0" stroke-width="11" stroke-linecap="round"/><path d="M540 516C531 536 525 560 522 587" fill="none" stroke="#f0e5d0" stroke-width="5" stroke-linecap="round"/>
  <path d="M468 606C476 592 505 585 530 586L538 603C520 610 490 611 468 606z" fill="#ecdfc7"/>
  <!-- shin 1 + foot 1 -->
  <path d="M484 518C492 534 504 548 512 560" fill="none" stroke="#d4c1a0" stroke-width="11" stroke-linecap="round"/><path d="M485 517C493 533 505 547 513 559" fill="none" stroke="#f2e8d4" stroke-width="5" stroke-linecap="round"/>
  <path d="M455 586C460 573 488 562 514 562L516 572C500 582 475 588 455 586z" fill="#efe3cc"/>
  <!-- '<' limb -->
  <path d="M486 445L517 482L484 517" fill="none" stroke="#cdb894" stroke-width="13" stroke-linecap="round" stroke-linejoin="round"/>
  <path d="M485 443L514 480L484 513" fill="none" stroke="#f2e8d4" stroke-width="6.500" stroke-linecap="round" stroke-linejoin="round"/>
  <!-- torso / upper-arm teardrop -->
  <path d="M498 448C510 438 540 444 569 460C571 462 570 464 567 464C540 470 512 472 500 466C494 462 493 453 498 448z" fill="url(#lb)"/>
  <path d="M502 466C520 472 545 470 566 464" fill="none" stroke="#8a7252" stroke-width="2" opacity=".55" filter="url(#b1)"/>
  <!-- forearm hanging + hand -->
  <path d="M568 462C552 480 534 500 522 520" fill="none" stroke="#d0bc9a" stroke-width="11" stroke-linecap="round"/>
  <path d="M566 460C550 478 532 498 520 517" fill="none" stroke="#f3e9d6" stroke-width="5.500" stroke-linecap="round"/>
  <path d="M512 520l-1 16M516.500 522l1 18M521 523l2 17M525.500 521l3 14" stroke="#eadcc2" stroke-width="3.600" stroke-linecap="round"/>
  <path d="M527 524l2 12" stroke="#5a4634" stroke-width="1.200" opacity=".7"/>
</g>
<g id="fgH">
  <!-- chin forearm + fist -->
  <path d="M461 460C464 480 472 500 483 514" fill="none" stroke="#d6c3a2" stroke-width="9" stroke-linecap="round"/><path d="M460 460C463 480 471 500 482 513" fill="none" stroke="#f0e5d0" stroke-width="4.500" stroke-linecap="round"/>
  <path d="M457 452C456 446 462 443 468 444C474 444 477 449 475 455C473 461 466 463 461 461C458 459 457 456 457 452z" fill="#efe3cc"/>
  <path d="M466 457c0-4 3-7 6-7" fill="none" stroke="#3a2c20" stroke-width="1.800"/>
  <!-- head -->
  <path d="M470 366C492 364 508 380 507 398C506 416 494 432 481 444C478 447 474 446 471 443C452 428 436 414 435 396C434 380 448 367 470 366z" fill="url(#hd)"/>
</g>
<g id="fig"><use href="#fgS"/><use href="#fgC"/><use href="#fgK"/><use href="#fgB"/><use href="#fgH"/></g>
<g id="figR"><use href="#fgS" transform="translate(1316,0) scale(-1,1)"/><use href="#fgC" transform="translate(1329,0) scale(-1,1)"/><use href="#fgK" transform="translate(1313,0) scale(-1,1)"/><use href="#fgB" transform="translate(1200,0) scale(-.775,1)"/><use href="#fgH" transform="translate(1306,0) scale(-1,1)"/></g>
</defs>
<rect x="390.500" y="239" width="534.500" height="389" fill="url(#bgf)"/>
<use href="#fig"/>
<use href="#figR"/>
<!-- question mark -->
<path d="M554 346C549 290 590 241.500 652 241.500C712 241.500 752 280 752 322C752 358 722 378 700 400C680 420 670 440 669.500 465C669 472 632 472 631 466C624 440 632 412 656 394C680 374 703.500 358 703.500 328C703.500 298 680 276 648 276C618 276 598 300 599 342C599 353 555 354 554 346z" fill="url(#qb)"/>
<path d="M599 342C598 300 618 276 648 276C680 276 703.500 298 703.500 328C703.500 358 680 374 656 394C632 412 624 440 631 466" fill="none" stroke="#1f7fcb" stroke-width="2.500" opacity=".8" filter="url(#b1)"/>
<path d="M606 342C605 304 622 283 648 283C676 283 696 301 696 328" fill="none" stroke="#bfe6f8" stroke-width="3" opacity=".7" filter="url(#b1)"/>
<path d="M560 347C566 351 590 351 597 346" fill="none" stroke="#1f7fcb" stroke-width="2" opacity=".8"/>
<path d="M636 466C642 470 660 470 666 465" fill="none" stroke="#1f7fcb" stroke-width="2" opacity=".7"/>
<path d="M730 296C740 326 722 352 690 384" fill="none" stroke="#9adcf6" stroke-width="12" opacity=".5" filter="url(#b3)"/><path d="M575 330C575 290 605 262 650 260" fill="none" stroke="#9adcf6" stroke-width="10" opacity=".4" filter="url(#b3)"/>
<path d="M697 336C694 362 676 378 660 392C640 410 634 436 638 462" fill="none" stroke="#2f93da" stroke-width="3.500" opacity=".55" filter="url(#b1)"/><path d="M712 382C690 404 678 424 676 452" fill="none" stroke="#2f93da" stroke-width="2.500" opacity=".45" filter="url(#b1)"/>
<!-- dot -->
<rect x="625" y="501.500" width="50" height="49" rx="14" fill="url(#qs)"/>
<rect x="634" y="510" width="30" height="36" rx="8" fill="#7fd0f2" opacity=".55" filter="url(#b3)"/>
<path d="M632 512v30M668 512v30" stroke="#1f7fcb" stroke-width="2" opacity=".7" filter="url(#b1)"/>
<ellipse cx="650" cy="556" rx="30" ry="5" fill="#cdd9d6" opacity=".5" filter="url(#b3)"/>
</svg>
<!-- main slide -->

<style>
.st{position:absolute;left:310px;width:706px;font-family:"Liberation Serif","DejaVu Serif",serif;font-size:22.950px;line-height:31.300px;height:31.300px;color:#000;white-space:nowrap;text-align:justify;text-align-last:justify}
.st.l{text-align:left;text-align-last:left}
.st.i{padding-left:29px}
.st b{color:#e30b0b}
.sq{text-decoration:underline wavy #e33;text-decoration-thickness:.7px;text-underline-offset:3px;text-decoration-skip-ink:none}
</style>
<div class="st l i" style="top:241.900px"><b>The research questions:</b></div>
<div class="st i" style="top:318.900px;white-space:normal"><b><span class="sq">i</span>.</b> Are the meanings of <span class="sq">colour</span> <i>black</i> lumped or <span class="sq">splitted</span> i.e. generalized or</div>
<div class="st l" style="top:350.100px">detailed in all understudied language dictionary presentation?</div>
<div class="st i" style="top:389.200px;white-space:normal"><b>ii.</b> What is the purpose of simplification and limitations of the entire</div>
<div class="st l" style="top:420.500px">presentation of the meanings in a pedagogical dictionary?</div>
<div class="st i" style="top:458.800px;white-space:normal"><b>iii.</b> Is the interpretation of the <i>black</i> polysemy provided in similar fashion</div>
<div class="st l" style="top:490.100px">in the lexicographic presentation for all understudied language dictionaries?</div>
<div class="st i" style="top:529.500px;white-space:normal"><b>iv.</b> How the <span class="sq">colour</span> term <i>black</i> might be improved and made more</div>
<div class="st" style="top:560.800px;white-space:normal">appealing of its presentation for leaners and users of pedagogical/learner's</div>
<div class="st l" style="top:592.100px">dictionaries?</div>
<svg id="ibeam" style="left:780px;top:505px" width="7" height="18" viewBox="0 0 7 18"><path d="M1 .5c1.500 0 2.500.5 2.500 1.500v14c0 1-1 1.500-2.500 1.500M6 .5c-1.500 0-2.500.5-2.500 1.500M3.500 16c0 1 1 1.500 2.500 1.500M2 9h3" fill="none" stroke="#7a7f8c" stroke-width="1"/></svg>
<!-- zoom gallery strip -->
<style>
.vt{position:absolute;left:1226px;width:200px;height:113px;overflow:hidden;background:#555}
.vt svg{left:0;top:0}
.nm{position:absolute;left:0;bottom:0;height:24.500px;background:rgba(34,34,36,.8);color:#fff;font-size:15.300px;line-height:24px;white-space:nowrap;padding-left:6px}
.nm.m{padding-left:28.500px}
.mic{position:absolute;left:4.500px;top:3px}
</style>
<svg width="0" height="0" style="left:0;top:0"><defs>
<filter id="v1" filterUnits="userSpaceOnUse" x="-30" y="-30" width="260" height="180"><feGaussianBlur stdDeviation="1"/></filter>
<filter id="v2" filterUnits="userSpaceOnUse" x="-30" y="-30" width="260" height="180"><feGaussianBlur stdDeviation="2.200"/></filter>
<filter id="v4" filterUnits="userSpaceOnUse" x="-30" y="-30" width="260" height="180"><feGaussianBlur stdDeviation="4.500"/></filter>
<g id="micoff"><rect x="6.500" y="1.500" width="5.500" height="10" rx="2.750" fill="#e8403a"/><path d="M3.600 8.500v1a5.650 5.650 0 0 0 11.300 0v-1" fill="none" stroke="#e8403a" stroke-width="1.400"/><path d="M9.250 15.200v2.300M6 17.400h6.500" stroke="#e8403a" stroke-width="1.400"/><path d="M17.500 1 1 17.500" stroke="#e8403a" stroke-width="1.700"/></g>
</defs></svg>

<!-- 1 Rita -->
<div class="vt" style="top:21px">
<svg width="200" height="113" viewBox="0 0 200 113">
<defs><linearGradient id="w1" x1="0" y1="0" x2="1" y2="0"><stop offset="0" stop-color="#7a787b"/><stop offset=".5" stop-color="#858386"/><stop offset="1" stop-color="#8b898c"/></linearGradient></defs>
<rect width="200" height="113" fill="url(#w1)"/>
<path d="M5 113 10 22 30 28 32 113z" fill="#46281a" filter="url(#v1)"/>
<path d="M146 101h54v12h-54z" fill="#5a4436" filter="url(#v1)"/><path d="M150 104h50" stroke="#8a7868" stroke-width="2" filter="url(#v1)"/>
<path d="M98 82h36v8H98z" fill="#9a908a" filter="url(#v2)"/><path d="M118 72v16" stroke="#9a9498" stroke-width="1.500"/>
<path d="M25 113C30 84 50 80 72 80C100 80 130 84 146 113z" fill="#e4e4e2" filter="url(#v2)"/>
<path d="M30 50C22 10 50-6 76-4C104-6 122 12 114 44C112 60 104 66 98 62L40 70C34 70 32 62 30 50z" fill="#4b3a32" filter="url(#v2)"/>
<path d="M40 46C38 20 56 12 72 12C90 12 104 22 102 48C100 76 86 92 72 92C56 92 42 74 40 46z" fill="#c9a898" filter="url(#v2)"/>
<path d="M46 38C56 28 88 28 98 40" stroke="#d8b8a8" stroke-width="10" fill="none" filter="url(#v4)"/>
<path d="M51 53h12M79 53h12" stroke="#4a3a34" stroke-width="3" filter="url(#v1)"/><path d="M62 80h18" stroke="#a87a72" stroke-width="2.500" filter="url(#v1)"/><path d="M70 58v12" stroke="#a88878" stroke-width="3" filter="url(#v2)"/>
</svg>
<div class="nm" style="width:127px">Rita Brdar-Szabó</div>
</div>

<!-- 2 Anna -->
<div class="vt" style="top:141px">
<svg width="200" height="113" viewBox="0 0 200 113">
<rect width="200" height="113" fill="#f4f2ee"/>
<!-- bookshelf -->
<rect x="110" y="0" width="90" height="113" fill="#8f5f30"/>
<path d="M172 0h28v20l-26-16z" fill="#c9b9a8" filter="url(#v1)"/>
<g filter="url(#v1)">
<path d="M110 0h20v113h-20z" fill="#85562a"/>
<path d="M130 2 172 8v20l-42-10z" fill="#cfcabb"/><path d="M132 4l2 14M138 5l2 14M146 7l1 16M154 10v14M162 8l1 18M168 8v20" stroke="#6f8aa0" stroke-width="2.200"/>
<path d="M150 9v14M158 6v18" stroke="#f0ede4" stroke-width="3"/>
<path d="M128 20 174 32v5L128 25z" fill="#6e4520"/>
<path d="M131 30 172 40v22l-41-8z" fill="#c4c1b4"/><path d="M134 32v22M142 34v22M156 38v22M166 40v22" stroke="#7d97a8" stroke-width="2.600"/><path d="M148 35v22M161 38v22" stroke="#e9e6dc" stroke-width="3"/><path d="M152 37v22" stroke="#c06a50" stroke-width="1.800"/>
<path d="M128 56 176 66v5L128 61z" fill="#6a421e"/>
<path d="M132 64 176 70v20l-44-2z" fill="#c9c2b0"/><path d="M134 66h9v22h-9z" fill="#3e86a8"/><path d="M147 68v20M153 68v20" stroke="#8fb88a" stroke-width="2.600"/><path d="M160 69v20M171 70v20" stroke="#e6e0d2" stroke-width="3"/><path d="M165 70v19" stroke="#c23a2e" stroke-width="3"/>
<path d="M130 90 200 88v5l-70 3z" fill="#6a421e"/>
<path d="M140 97 180 95v18h-40z" fill="#cbc5b6"/>
<path d="M174 4 200 20v93h-26z" fill="#7d5228" opacity=".35"/>
<path d="M178 14 198 26v16l-20-10zM178 46l20 8v16l-20-6zM178 76l20 3v14l-20-1z" fill="#8e9aa2" opacity=".8"/>
<path d="M190 84h10v29h-10z" fill="#4a2a18"/>
</g>
<!-- carpet -->
<path d="M0 0H25L84 21V113H0z" fill="#591b15"/>
<g filter="url(#v1)">
<path d="M0 2 24 2 82 23" fill="none" stroke="#a5412a" stroke-width="2.500"/><path d="M82 23V113" stroke="#8c3020" stroke-width="2.500"/>
<path d="M0 9 76 30V100" fill="none" stroke="#24181a" stroke-width="5"/>
<path d="M0 20 67 38V95" fill="none" stroke="#d8c7ae" stroke-width="9" stroke-dasharray="2.200 1.800"/>
<path d="M0 20 67 38V95" fill="none" stroke="#7a2a22" stroke-width="3" stroke-dasharray="1.200 4.800"/>
<path d="M0 31 58 46V95" fill="none" stroke="#2a1c20" stroke-width="5"/>
<path d="M0 42 55 50V92H0z" fill="#1f2a38"/>
<path d="M0 42 55 50V92" fill="none" stroke="#b23a28" stroke-width="2"/>
<g fill="#b8382c"><circle cx="8" cy="55" r="3.500"/><circle cx="22" cy="64" r="4"/><circle cx="8" cy="74" r="3.500"/><circle cx="44" cy="62" r="3.500"/><circle cx="26" cy="84" r="4"/><circle cx="46" cy="82" r="3.500"/><circle cx="12" cy="88" r="3"/></g>
<g fill="#d9c9b2"><circle cx="15" cy="60" r="2"/><circle cx="30" cy="56" r="2"/><circle cx="40" cy="72" r="2.500"/><circle cx="16" cy="68" r="1.800"/><circle cx="34" cy="76" r="2"/><circle cx="6" cy="82" r="1.800"/><path d="M32 50h3v26h-3z"/><path d="M26 54c2 4 12 4 15 0" fill="none" stroke="#c9886a" stroke-width="1.500"/></g>
</g>
<path d="M85 24c3 0 5 1 6 3v60h-6z" fill="#d6d4cc" filter="url(#v1)"/><path d="M88 30v56" stroke="#8a8a86" stroke-width="1" stroke-dasharray="2 2"/>
<!-- person -->
<path d="M68 113C72 96 88 90 108 90C126 90 140 96 146 113z" fill="#4b4a48" filter="url(#v1)"/>
<path d="M134 96C146 92 156 100 160 113H138z" fill="#cf967c" filter="url(#v1)"/>
<path d="M100 82h18v14c-6 4-12 4-18 0z" fill="#c98f76" filter="url(#v1)"/>
<path d="M88 56C86 40 98 34 110 34C124 34 136 42 134 58C133 66 130 70 126 68L96 72C90 70 89 64 88 56z" fill="#3a2a1e" filter="url(#v2)"/>
<path d="M95 62C94 50 102 45 110 45C119 45 126 50 125 64C124 78 118 86 110 86C102 86 96 78 95 62z" fill="#cd957c" filter="url(#v1)"/>
<path d="M96 57h12v6.500H96zM112 57h12v6.500h-12z" fill="#d8b8b0" fill-opacity=".35" stroke="#3a2624" stroke-width="1.100"/><path d="M108 59h4" stroke="#3a2624" stroke-width="1"/>
<path d="M104 75c4 2 8 2 12 0" fill="none" stroke="#9a4a44" stroke-width="1.600" filter="url(#v1)"/>
</svg>
<div class="nm m" style="width:136px"><svg class="mic" width="18" height="18" viewBox="0 0 18 18"><use href="#micoff"/></svg>Anna Litovkina</div>
</div>

<!-- 3 asharif -->
<div class="vt" style="top:261px">
<svg width="200" height="113" viewBox="0 0 200 113">
<rect width="200" height="113" fill="#2b2429"/>
<g filter="url(#v1)" fill="#8a848a" opacity=".55"><circle cx="150" cy="20" r="3"/><circle cx="170" cy="44" r="3"/><circle cx="186" cy="18" r="3"/><circle cx="140" cy="52" r="2.500"/><circle cx="190" cy="70" r="3"/><circle cx="160" cy="74" r="2.500"/><circle cx="6" cy="30" r="3"/><circle cx="8" cy="70" r="3"/><circle cx="176" cy="96" r="3"/></g>
<path d="M14 0h66v100H14z" fill="#e9eef6" filter="url(#v2)"/><path d="M30 0v90M48 0v90M64 0v90" stroke="#c8d0e0" stroke-width="3" filter="url(#v2)"/>
<path d="M50 74h106v39H50z" fill="#a89068" filter="url(#v1)"/><path d="M54 78h98v35H54z" fill="#d8d0c8" filter="url(#v1)"/><path d="M192 70h8v43h-8z" fill="#c8b8a0" filter="url(#v1)"/>
<path d="M44 113C52 76 74 64 100 62C128 62 150 72 176 96L196 113z" fill="#ea6f9c" filter="url(#v2)"/>
<path d="M60 104C70 84 84 72 96 70" stroke="#f48ab0" stroke-width="8" fill="none" filter="url(#v4)"/>
<path d="M90 68 104 113H118L112 68z" fill="#e8e4e4" filter="url(#v1)"/>
<path d="M70 30C66 4 84-4 98-4C116-4 126 8 122 34C121 44 116 48 112 46L80 48C74 46 72 40 70 30z" fill="#241c1e" filter="url(#v2)"/>
<path d="M78 34C77 20 86 14 97 14C108 14 116 20 115 36C114 54 106 64 97 64C88 64 79 54 78 34z" fill="#cf9a84" filter="url(#v2)"/>
<path d="M80 36h15v8H80zM99 36h15v8H99z" fill="none" stroke="#e8d8d8" stroke-width="2" filter="url(#v1)"/>
<path d="M112 66l3 18" stroke="#1a1418" stroke-width="3" filter="url(#v1)"/>
</svg>
<div class="nm m" style="width:80px"><svg class="mic" width="18" height="18" viewBox="0 0 18 18"><use href="#micoff"/></svg>asharif</div>
</div>

<!-- 4 Daler (active speaker) -->
<div class="a" style="left:1221px;top:376px;width:210px;height:123px;background:linear-gradient(180deg,#e2ea86 0%,#d6e664 6%,#bfe044 30%,#74c61c 47%,#74c61c 56%,#bfe044 70%,#d6e664 94%,#e6ec8e 100%)"></div>
<div class="a" style="left:1221px;top:376px;width:210px;height:5px;background:#dfe982"></div><div class="a" style="left:1221px;top:494px;width:210px;height:5px;background:#e3eb8a"></div><div class="a" style="left:1224px;top:379px;width:204px;height:117px;border:2px solid rgba(236,242,160,.5)"></div>
<div class="vt" style="top:381px">
<svg width="200" height="113" viewBox="0 0 200 113">
<defs><linearGradient id="w4" x1="0" y1="0" x2="1" y2="1"><stop offset="0" stop-color="#5f716f"/><stop offset=".6" stop-color="#73827f"/><stop offset="1" stop-color="#7d8a86"/></linearGradient></defs>
<rect width="200" height="113" fill="url(#w4)"/>
<ellipse cx="60" cy="40" rx="50" ry="34" fill="#8c9893" opacity=".55" filter="url(#v4)"/>
<path d="M160 0h40v80l-30-10z" fill="#5f6f6e" opacity=".6" filter="url(#v4)"/>
<path d="M43 113C44 76 58 62 82 61C100 61 108 70 110 113z" fill="#26262c" filter="url(#v2)"/>
<path d="M58 113C68 82 98 67 126 67C160 67 188 80 200 100V113z" fill="#3b598c" filter="url(#v2)"/>
<path d="M82 100C94 82 110 74 122 73" stroke="#4a6c9e" stroke-width="8" fill="none" filter="url(#v4)"/>
<path d="M156 78C176 84 192 98 200 113H150z" fill="#33507f" filter="url(#v2)"/>
<path d="M103 36C102 15 115 6 130 6C147 6 158 16 157 38C156 60 144 78 130 78C116 78 104 60 103 36z" fill="#c69a80" filter="url(#v2)"/>
<path d="M108 24C114 10 146 10 152 24" stroke="#dcb8a0" stroke-width="10" fill="none" filter="url(#v4)"/>
<path d="M108 54C112 72 122 79 130 79C140 79 150 70 153 54C146 64 114 64 108 54z" fill="#a8806a" opacity=".7" filter="url(#v2)"/>
<path d="M154 36c4 0 5 4 4 9s-3 7-5 6z" fill="#c08e76" filter="url(#v1)"/>
<path d="M110 33c4-2 9-2 13 0M135 33c4-2 9-2 13 0" stroke="#3a2a24" stroke-width="2" fill="none" filter="url(#v1)"/><path d="M112 38.500h10M137 38.500h10" stroke="#2a1e1c" stroke-width="2.400" filter="url(#v1)"/>
<path d="M128 40v14" stroke="#b08870" stroke-width="3" filter="url(#v2)"/>
<path d="M120 62C125 59 137 59 141 62C137 66 125 66 120 62z" fill="#7a4640" filter="url(#v1)"/>
<path d="M114 92C116 76 132 69 150 71C164 73 170 80 168 92C164 101 148 104 132 101C122 100 114 98 114 92z" fill="#d5aa8e" filter="url(#v2)"/>
<path d="M160 84C176 90 190 100 200 112V113H170C168 104 164 96 156 92z" fill="#cfa288" filter="url(#v2)"/>
<path d="M124 82c6-4 14-5 22-3M122 89c8-4 18-5 28-2" stroke="#b88a72" stroke-width="1.500" fill="none" filter="url(#v1)"/>
<path d="M113 92C118 104 136 104 150 101C160 106 166 110 168 113" stroke="#e8e8f0" stroke-width="1.500" fill="none" filter="url(#v1)"/><path d="M151 46C154 58 152 68 150 74" stroke="#e0e0e8" stroke-width="1.200" fill="none" opacity=".85"/>
</svg>
<div class="nm" style="width:104px">Daler Zayniev</div>
</div>

<!-- 5 Xiaoqi -->
<div class="vt" style="top:501px">
<svg width="200" height="113" viewBox="0 0 200 113">
<defs><linearGradient id="w5" x1="0" y1="0" x2="1" y2="0"><stop offset="0" stop-color="#e2d6cf"/><stop offset=".6" stop-color="#ece4de"/><stop offset=".75" stop-color="#fbfafa"/><stop offset="1" stop-color="#ffffff"/></linearGradient></defs>
<rect width="200" height="113" fill="url(#w5)"/>
<path d="M150 0h50v113h-50z" fill="#fefefe" filter="url(#v2)"/>
<path d="M56 113C60 60 60 10 90 2C118-4 134 14 138 44C142 76 150 96 158 113z" fill="#1f191b" filter="url(#v2)"/>
<path d="M100 113C108 96 128 90 150 92C172 94 186 104 192 113z" fill="#3b3aa0" filter="url(#v2)"/>
<path d="M72 40C70 18 82 10 96 10C112 10 122 20 120 44C118 68 108 84 96 84C84 84 74 68 72 40z" fill="#dfb59f" filter="url(#v2)"/>
<path d="M78 30C84 20 110 20 116 32" stroke="#edc9b4" stroke-width="8" fill="none" filter="url(#v4)"/>
<path d="M90 84h16v14H90z" fill="#d2a48e" filter="url(#v2)"/>
<circle cx="84" cy="48" r="8.500" fill="none" stroke="#6a5a58" stroke-width="1.200"/><circle cx="108" cy="48" r="8.500" fill="none" stroke="#6a5a58" stroke-width="1.200"/>
<path d="M79 47h9M103 47h9" stroke="#2a1c1c" stroke-width="2.200" filter="url(#v1)"/><path d="M90 72h12" stroke="#b86a68" stroke-width="2.600" filter="url(#v1)"/>
</svg>
<div class="nm m" style="width:100px"><svg class="mic" width="18" height="18" viewBox="0 0 18 18"><use href="#micoff"/></svg>Xiaoqi Liu</div>
</div>

<!-- 6 Polina -->
<div class="vt" style="top:621px">
<svg width="200" height="113" viewBox="0 0 200 113">
<defs><linearGradient id="w6" x1="0" y1="0" x2="1" y2="0"><stop offset="0" stop-color="#ffffff"/><stop offset=".06" stop-color="#fdf4f0"/><stop offset=".12" stop-color="#f0a088"/><stop offset=".2" stop-color="#e86a4a"/><stop offset=".235" stop-color="#c85a40"/><stop offset=".24" stop-color="#2c2230"/><stop offset=".28" stop-color="#2c2230"/><stop offset=".285" stop-color="#e6cca8"/><stop offset=".6" stop-color="#e2d0b6"/><stop offset="1" stop-color="#d6c8b2"/></linearGradient></defs>
<rect width="200" height="113" fill="url(#w6)"/>
<path d="M0 0h24v113H0z" fill="#ffffff" filter="url(#v2)" opacity=".9"/>
<path d="M150 100h50v13h-50z" fill="#1c1c1e" filter="url(#v1)"/><path d="M176 96h18v5h-18z" fill="#2a2a2c"/>
<path d="M50 113C60 96 84 88 106 88C130 88 146 96 154 113z" fill="#e8786a" filter="url(#v2)"/>
<path d="M84 60C80 36 94 28 108 30C124 30 134 40 130 62C129 70 124 72 120 70L92 72C86 70 85 66 84 60z" fill="#3a2a26" filter="url(#v2)"/>
<path d="M90 62C89 50 98 46 107 46C117 46 125 50 124 64C123 80 116 92 107 92C98 92 91 80 90 62z" fill="#d3a690" filter="url(#v2)"/>
<path d="M90 66h15v8H90zM109 66h15v8h-15z" fill="none" stroke="#2a2220" stroke-width="1.600"/>
<path d="M94 69h8M112 69h8" stroke="#4a3a38" stroke-width="2" filter="url(#v1)"/>
</svg>
<div class="nm m" style="width:135px"><svg class="mic" width="18" height="18" viewBox="0 0 18 18"><use href="#micoff"/></svg>Polina Oleneva</div>
</div>
</body>
</html>
